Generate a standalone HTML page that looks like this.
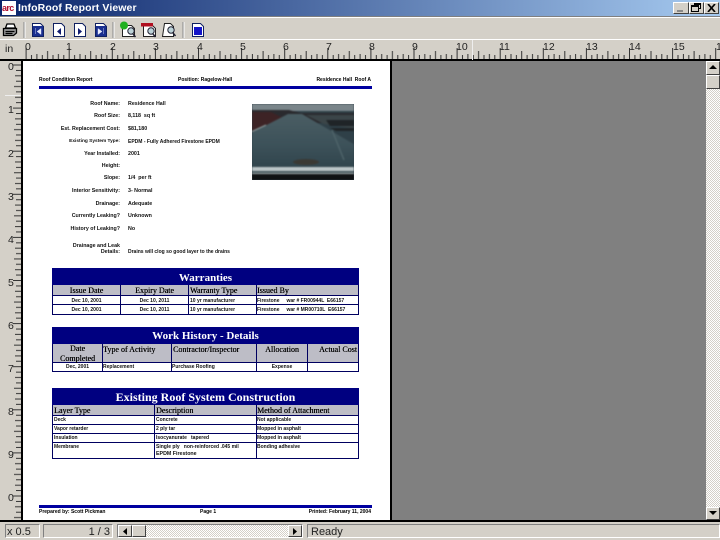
<!DOCTYPE html>
<html><head><meta charset="utf-8"><style>
html,body{margin:0;padding:0;background:#d4d0c8}
#a{position:relative;width:720px;height:540px;overflow:hidden;background:#d4d0c8;font-family:"Liberation Sans",sans-serif}
#a div,#a svg{position:absolute}
.t{white-space:nowrap;color:#000}
.lb{right:600px;font:bold 5.3px "Liberation Sans",sans-serif;white-space:nowrap;color:#111;line-height:6px;filter:blur(.25px)}
.vl{left:128px;font:bold 5.3px "Liberation Sans",sans-serif;white-space:nowrap;color:#111;line-height:6px;filter:blur(.25px)}
.n{font:10.5px "Liberation Sans",sans-serif;color:#222;line-height:11px}
.tb{background:#000080;color:#fff;font:bold 11px "Liberation Serif",serif;text-align:center}
.hd{background:#bdbdc6;font:8px "Liberation Serif",serif;color:#000;white-space:nowrap;line-height:9px;text-shadow:.2px 0 0 #000}
.c{font:bold 5px "Liberation Sans",sans-serif;color:#111;white-space:nowrap;line-height:7px;filter:blur(.2px)}
.ln{background:#000060}
.sk{border:1px solid;border-color:#808080 #fff #fff #808080;box-sizing:border-box}
.btn{background:#d4d0c8;border:1px solid;border-color:#fff #404040 #404040 #fff;box-sizing:border-box}
</style></head><body><div id="a">

<!-- title bar -->
<div style="left:0;top:0;width:720px;height:16px;background:linear-gradient(90deg,#0a246a,#a6caf0)"></div>
<div style="left:2px;top:1px;width:14px;height:14px;background:#fff;overflow:hidden;color:#b01030;font:bold 9px/14px 'Liberation Sans',sans-serif;letter-spacing:-.6px">arc</div>
<div class="t" style="left:18px;top:1px;color:#fff;font:bold 10.5px/15px 'Liberation Sans',sans-serif;letter-spacing:.1px">InfoRoof Report Viewer</div>
<div class="btn" style="left:673px;top:2px;width:16px;height:12px"></div><div style="left:677px;top:10px;width:6px;height:2px;background:#888"></div>
<div class="btn" style="left:689px;top:2px;width:15px;height:12px"></div>
<svg style="left:691px;top:3px" width="11" height="10"><path d="M3.5 2.5V.5h6v5h-2M.5 2.5h7v6h-7zM.5 3.5h7M3.5 1.5h6" fill="none" stroke="#000"/></svg>
<div class="btn" style="left:704px;top:2px;width:15px;height:12px"></div>
<svg style="left:707px;top:4px" width="9" height="8"><path d="M1 0l7 8M8 0L1 8" stroke="#000" stroke-width="1.7"/></svg>

<div style="left:0;top:16px;width:720px;height:1px;background:#808080"></div>
<div style="left:0;top:17px;width:720px;height:1px;background:#fff"></div>
<div style="left:0;top:39px;width:720px;height:1px;background:#fff"></div>

<!-- toolbar -->
<svg style="left:0;top:19px" width="210" height="20">
<g fill="none" stroke="#000" stroke-width="1.300">
<path d="M7 5h7l1.500 4H5.500z" fill="#fff"/>
<path d="M3.500 9.500h13v4.500l-3 2.500h-10z" fill="#999"/>
<path d="M5.500 12.500h9M5.500 14.500h7"/>
</g>
<path d="M24 3v16" stroke="#888"/><path d="M25 3v16" stroke="#fff"/>
<path d="M113 3v16" stroke="#888"/><path d="M114 3v16" stroke="#fff"/>
<path d="M183 3v16" stroke="#888"/><path d="M184 3v16" stroke="#fff"/>
<g stroke="#102060" fill="#fff">
<path d="M32.500 4.500h8l3 3v10h-11z"/>
<path d="M53.500 4.500h8l3 3v10h-11z"/>
<path d="M74.500 4.500h8l3 3v10h-11z"/>
<path d="M95.500 4.500h8l3 3v10h-11z"/>
</g>
<rect x="33" y="7" width="10" height="10" fill="#1a2f90"/>
<rect x="96" y="7" width="10" height="10" fill="#1a2f90"/>
<path d="M35.500 9v6M41 9.500l-4 3 4 3z" fill="#e8ecff" stroke="#e8ecff" stroke-width=".4"/>
<path d="M98 9.500l4 3-4 3zM103.500 9v6" fill="#e8ecff" stroke="#e8ecff" stroke-width=".4"/>
<path d="M61 9l-4 3.500 4 3.500z" fill="#101c70"/>
<path d="M78 9l4 3.500-4 3.500z" fill="#101c70"/>

<path d="M122.500 6.500h9l3 3v8h-12z" fill="#fff" stroke="#222"/>
<circle cx="124" cy="6.500" r="4" fill="#20b020"/>
<circle cx="131" cy="12" r="3.200" fill="#bcd2d8" stroke="#223"/><path d="M133 15l2.500 3" stroke="#223" stroke-width="1.500"/>
<path d="M143.500 6.500h9l3 3v8h-12z" fill="#fff" stroke="#222"/>
<rect x="141" y="4" width="12" height="3.500" fill="#b01020"/>
<circle cx="151" cy="12" r="3.200" fill="#bcd2d8" stroke="#223"/><path d="M153 15l2.500 3" stroke="#223" stroke-width="1.500"/>
<path d="M164.500 4.500h6l3 3v10h-11z" fill="#fff" stroke="#222"/>
<circle cx="171" cy="11" r="3.200" fill="#bcd2d8" stroke="#223"/><path d="M173 14l2.500 3" stroke="#223" stroke-width="1.500"/>
<path d="M192.500 4.500h8l3 3v10h-11z" fill="#fff" stroke="#102060"/>
<rect x="194" y="8" width="8" height="8" fill="#1414c8"/>
</svg>

<!-- top ruler -->
<svg style="left:0;top:40px" width="720" height="20">
<defs><pattern id="rt" patternUnits="userSpaceOnUse" x="25.600" y="0" width="43.100" height="20">
<g stroke="#333" stroke-width="1">
<path d="M.5 8V20M5.900 15V20M11.300 14V20M16.700 15V20M22 11V20M27.400 15V20M32.800 14V20M38.200 15V20"/>
</g></pattern></defs>
<rect x="22" y="0" width="698" height="20" fill="url(#rt)"/>
</svg>
<div style="left:0;top:59px;width:720px;height:2px;background:#000"></div>
<div style="left:472px;top:40px;width:1px;height:20px;background:#eee"></div>
<div class="n" style="left:5px;top:44px">in</div>
<div class="n" style="left:25px;top:42px">0</div><div class="n" style="left:66px;top:42px">1</div><div class="n" style="left:110px;top:42px">2</div><div class="n" style="left:153px;top:42px">3</div><div class="n" style="left:197px;top:42px">4</div><div class="n" style="left:240px;top:42px">5</div><div class="n" style="left:283px;top:42px">6</div><div class="n" style="left:326px;top:42px">7</div><div class="n" style="left:369px;top:42px">8</div><div class="n" style="left:412px;top:42px">9</div><div class="n" style="left:456px;top:42px">10</div><div class="n" style="left:499px;top:42px">11</div><div class="n" style="left:543px;top:42px">12</div><div class="n" style="left:586px;top:42px">13</div><div class="n" style="left:629px;top:42px">14</div><div class="n" style="left:673px;top:42px">15</div><div class="n" style="left:716px;top:42px">16</div>

<!-- left ruler -->
<svg style="left:0;top:61px" width="22" height="460">
<defs><pattern id="rl" patternUnits="userSpaceOnUse" x="0" y="3.500" width="22" height="43.100">
<g stroke="#333" stroke-width="1">
<path d="M13 .5H22M16 5.900H22M15 11.300H22M16 16.700H22M14 22H22M16 27.400H22M15 32.800H22M16 38.200H22"/>
</g></pattern></defs>
<rect width="22" height="460" fill="url(#rl)"/>
</svg>
<div class="n" style="left:8px;top:62px">0</div><div class="n" style="left:8px;top:105px">1</div><div class="n" style="left:8px;top:149px">2</div><div class="n" style="left:8px;top:192px">3</div><div class="n" style="left:8px;top:235px">4</div><div class="n" style="left:8px;top:278px">5</div><div class="n" style="left:8px;top:321px">6</div><div class="n" style="left:8px;top:364px">7</div><div class="n" style="left:8px;top:407px">8</div><div class="n" style="left:8px;top:450px">9</div><div class="n" style="left:8px;top:493px">0</div>
<div style="left:5px;top:95px;width:16px;height:1px;background:#eee"></div>

<!-- page area -->
<div style="left:21px;top:59px;width:2px;height:462px;background:#000"></div>
<div style="left:23px;top:61px;width:367px;height:460px;background:#fff"></div>
<div style="left:390px;top:60px;width:2px;height:461px;background:#000"></div>
<div style="left:392px;top:61px;width:314px;height:460px;background:#808080"></div>
<div style="left:0;top:520px;width:720px;height:2px;background:#000"></div>

<!-- vertical scrollbar -->
<div style="left:706px;top:61px;width:14px;height:459px;background-color:#e8e6e2;background-image:repeating-conic-gradient(#d4d0c8 0 25%,#fff 0 50%);background-size:2px 2px"></div>
<div class="btn" style="left:706px;top:61px;width:14px;height:14px"></div>
<svg style="left:709px;top:65px" width="8" height="5"><path d="M4 0l4 4H0z" fill="#000"/></svg>
<div class="btn" style="left:706px;top:75px;width:14px;height:14px"></div>
<div class="btn" style="left:706px;top:507px;width:14px;height:13px"></div>
<svg style="left:709px;top:511px" width="8" height="5"><path d="M0 0h8L4 4z" fill="#000"/></svg>

<!-- page header -->
<div class="t" style="left:39px;top:77px;font:bold 5px/6px 'Liberation Sans',sans-serif">Roof Condition Report</div>
<div class="t" style="left:178px;top:77px;font:bold 5px/6px 'Liberation Sans',sans-serif">Position: Ragelow-Hall</div>
<div class="t" style="right:349px;top:77px;font:bold 5px/6px 'Liberation Sans',sans-serif">Residence Hall &nbsp;Roof A</div>
<div style="left:39px;top:86px;width:333px;height:3px;background:#0000a0"></div>

<!-- fields -->
<div class="lb" style="top:101px">Roof Name:</div><div class="vl" style="top:101px">Residence Hall</div>
<div class="lb" style="top:113px">Roof Size:</div><div class="vl" style="top:113px">8,118 &nbsp;sq ft</div>
<div class="lb" style="top:126px">Est. Replacement Cost:</div><div class="vl" style="top:126px">$81,180</div>
<div class="lb" style="top:139px;font-size:4.800px">Existing System Type:</div><div class="vl" style="top:139px;font-size:5px">EPDM - Fully Adhered Firestone EPDM</div>
<div class="lb" style="top:151px">Year Installed:</div><div class="vl" style="top:151px">2001</div>
<div class="lb" style="top:163px">Height:</div>
<div class="lb" style="top:175px">Slope:</div><div class="vl" style="top:175px">1/4 &nbsp;per ft</div>
<div class="lb" style="top:188px">Interior Sensitivity:</div><div class="vl" style="top:188px">3- Normal</div>
<div class="lb" style="top:201px">Drainage:</div><div class="vl" style="top:201px">Adequate</div>
<div class="lb" style="top:213px">Currently Leaking?</div><div class="vl" style="top:213px">Unknown</div>
<div class="lb" style="top:226px">History of Leaking?</div><div class="vl" style="top:226px">No</div>
<div class="lb" style="top:243px">Drainage and Leak</div>
<div class="lb" style="top:249px">Details:</div><div class="vl" style="top:249px;font-size:5px">Drains will clog so good layer to the drains</div>

<!-- photo -->
<div style="left:252px;top:104px;width:102px;height:76px;overflow:hidden;background:#2f4048">
<svg style="left:0;top:0;filter:blur(.8px)" width="102" height="76" viewBox="0 0 102 76">
<defs><linearGradient id="rf" x1="0" y1="0" x2="0" y2="1"><stop offset="0" stop-color="#4a5d63"/><stop offset=".5" stop-color="#3c5159"/><stop offset="1" stop-color="#2c3f47"/></linearGradient></defs>
<rect x="-3" y="-3" width="108" height="84" fill="#2f4048"/>
<rect x="-3" y="-3" width="108" height="10" fill="#7a858a"/>
<path d="M-3 6h40l12 3h56v10H60L36 16-3 30z" fill="#2a2a2e"/>
<path d="M-3 8h22l12 6-8 6L-3 31z" fill="#3d2325"/>
<path d="M-3 30L36 10h14l55 32v30H-3z" fill="url(#rf)"/>
<path d="M54 11h51v14L72 20z" fill="#3b4548"/>
<path d="M74 16h28v6H78zM78 24h24v3H84z" fill="#1f2427"/>
<path d="M-3 29L14 21" stroke="#8a9a9c" stroke-width="1.200" fill="none"/>
<path d="M80 26l12 30" stroke="#4e6369" stroke-width="1.500" fill="none"/>
<ellipse cx="54" cy="58" rx="13" ry="3" fill="#3a3934"/>
<rect x="-3" y="63" width="108" height="4" fill="#bcc6c8"/>
<rect x="-3" y="67" width="108" height="2" fill="#46565c"/>
<rect x="-3" y="69" width="108" height="1" fill="#aab4b6"/>
<rect x="-3" y="70" width="108" height="9" fill="#101214"/>
</svg></div>

<!-- warranties -->
<div class="tb" style="left:52px;top:268px;width:307px;height:17px;line-height:21px">Warranties</div>
<div class="hd" style="left:52px;top:285px;width:307px;height:10px"></div>
<div class="ln" style="left:52px;top:285px;width:1px;height:30px"></div>
<div class="ln" style="left:358px;top:285px;width:1px;height:30px"></div>
<div class="ln" style="left:120px;top:285px;width:1px;height:30px"></div>
<div class="ln" style="left:188px;top:285px;width:1px;height:30px"></div>
<div class="ln" style="left:256px;top:285px;width:1px;height:30px"></div>
<div class="ln" style="left:52px;top:295px;width:307px;height:1px"></div>
<div class="ln" style="left:52px;top:304px;width:307px;height:1px"></div>
<div class="ln" style="left:52px;top:314px;width:307px;height:1px"></div>
<div class="hd" style="left:53px;top:286px;width:67px;text-align:center;background:none">Issue Date</div>
<div class="hd" style="left:121px;top:286px;width:67px;text-align:center;background:none">Expiry Date</div>
<div class="hd" style="left:190px;top:286px;background:none">Warranty Type</div>
<div class="hd" style="left:257px;top:286px;background:none">Issued By</div>
<div class="c" style="left:53px;top:298px;width:67px;text-align:center">Dec 10, 2001</div>
<div class="c" style="left:121px;top:298px;width:67px;text-align:center">Dec 10, 2011</div>
<div class="c" style="left:190px;top:298px">10 yr manufacturer</div>
<div class="c" style="left:257px;top:298px">Firestone &nbsp;&nbsp;&nbsp;&nbsp;war # FR00944L &nbsp;E66157</div>
<div class="c" style="left:53px;top:307px;width:67px;text-align:center">Dec 10, 2001</div>
<div class="c" style="left:121px;top:307px;width:67px;text-align:center">Dec 10, 2011</div>
<div class="c" style="left:190px;top:307px">10 yr manufacturer</div>
<div class="c" style="left:257px;top:307px">Firestone &nbsp;&nbsp;&nbsp;&nbsp;war # MR00710L &nbsp;E66157</div>

<!-- work history -->
<div class="tb" style="left:52px;top:327px;width:307px;height:17px;line-height:18px">Work History - Details</div>
<div class="hd" style="left:52px;top:344px;width:307px;height:18px"></div>
<div class="ln" style="left:52px;top:344px;width:1px;height:28px"></div>
<div class="ln" style="left:358px;top:344px;width:1px;height:28px"></div>
<div class="ln" style="left:102px;top:344px;width:1px;height:28px"></div>
<div class="ln" style="left:171px;top:344px;width:1px;height:28px"></div>
<div class="ln" style="left:256px;top:344px;width:1px;height:28px"></div>
<div class="ln" style="left:307px;top:344px;width:1px;height:28px"></div>
<div class="ln" style="left:52px;top:362px;width:307px;height:1px"></div>
<div class="ln" style="left:52px;top:371px;width:307px;height:1px"></div>
<div class="hd" style="left:53px;top:344px;width:49px;text-align:center;background:none;font-size:8px;line-height:10px">Date<br>Completed</div>
<div class="hd" style="left:103px;top:345px;background:none">Type of Activity</div>
<div class="hd" style="left:173px;top:345px;background:none">Contractor/Inspector</div>
<div class="hd" style="left:257px;top:345px;width:50px;text-align:center;background:none">Allocation</div>
<div class="hd" style="left:308px;top:345px;width:49px;text-align:right;background:none">Actual Cost</div>
<div class="c" style="left:53px;top:364px;width:49px;text-align:center">Dec, 2001</div>
<div class="c" style="left:103px;top:364px">Replacement</div>
<div class="c" style="left:172px;top:364px">Purchase Roofing</div>
<div class="c" style="left:257px;top:364px;width:50px;text-align:center">Expense</div>

<!-- construction -->
<div class="tb" style="left:52px;top:388px;width:307px;height:17px;line-height:18px;font-size:12px">Existing Roof System Construction</div>
<div class="hd" style="left:52px;top:405px;width:307px;height:10px"></div>
<div class="ln" style="left:52px;top:405px;width:1px;height:54px"></div>
<div class="ln" style="left:358px;top:405px;width:1px;height:54px"></div>
<div class="ln" style="left:154px;top:405px;width:1px;height:54px"></div>
<div class="ln" style="left:256px;top:405px;width:1px;height:54px"></div>
<div class="ln" style="left:52px;top:415px;width:307px;height:1px"></div>
<div class="ln" style="left:52px;top:424px;width:307px;height:1px"></div>
<div class="ln" style="left:52px;top:433px;width:307px;height:1px"></div>
<div class="ln" style="left:52px;top:442px;width:307px;height:1px"></div>
<div class="ln" style="left:52px;top:458px;width:307px;height:1px"></div>
<div class="hd" style="left:54px;top:406px;background:none">Layer Type</div>
<div class="hd" style="left:156px;top:406px;background:none">Description</div>
<div class="hd" style="left:257px;top:406px;background:none">Method of Attachment</div>
<div class="c" style="left:54px;top:417px">Deck</div><div class="c" style="left:156px;top:417px">Concrete</div><div class="c" style="left:257px;top:417px">Not applicable</div>
<div class="c" style="left:54px;top:426px">Vapor retarder</div><div class="c" style="left:156px;top:426px">2 ply tar</div><div class="c" style="left:257px;top:426px">Mopped in asphalt</div>
<div class="c" style="left:54px;top:435px">Insulation</div><div class="c" style="left:156px;top:435px">Isocyanurate &nbsp;&nbsp;tapered</div><div class="c" style="left:257px;top:435px">Mopped in asphalt</div>
<div class="c" style="left:54px;top:444px">Membrane</div><div class="c" style="left:156px;top:444px">Single ply &nbsp;&nbsp;non-reinforced .045 mil</div><div class="c" style="left:257px;top:444px">Bonding adhesive</div>
<div class="c" style="left:156px;top:451px;font-size:5.300px">EPDM Firestone</div>

<!-- page footer -->
<div style="left:39px;top:505px;width:333px;height:3px;background:#0000a0"></div>
<div class="t" style="left:39px;top:509px;font:bold 5px/6px 'Liberation Sans',sans-serif">Prepared by: Scott Pickman</div>
<div class="t" style="left:200px;top:509px;font:bold 5px/6px 'Liberation Sans',sans-serif">Page 1</div>
<div class="t" style="right:349px;top:509px;font:bold 5px/6px 'Liberation Sans',sans-serif">Printed: February 11, 2004</div>

<!-- status bar -->
<div class="sk" style="left:5px;top:524px;width:35px;height:14px"></div>
<div class="t" style="left:7px;top:526px;font:11px/12px 'Liberation Sans',sans-serif;color:#222">x 0.5</div>
<div class="sk" style="left:43px;top:524px;width:70px;height:14px"></div>
<div class="t" style="right:610px;top:526px;font:11px/12px 'Liberation Sans',sans-serif;color:#222">1 / 3</div>
<div class="sk" style="left:117px;top:524px;width:186px;height:14px;background-image:repeating-conic-gradient(#d4d0c8 0 25%,#fff 0 50%);background-size:2px 2px"></div>
<div class="btn" style="left:118px;top:525px;width:14px;height:12px"></div>
<svg style="left:123px;top:528px" width="4" height="7"><path d="M4 0v7L0 3.500z" fill="#000"/></svg>
<div class="btn" style="left:132px;top:525px;width:14px;height:12px"></div>
<div class="btn" style="left:288px;top:525px;width:14px;height:12px"></div>
<svg style="left:293px;top:528px" width="4" height="7"><path d="M0 0v7l4-3.500z" fill="#000"/></svg>
<div class="sk" style="left:307px;top:524px;width:413px;height:14px"></div>
<div class="t" style="left:311px;top:526px;font:11px/12px 'Liberation Sans',sans-serif;color:#222">Ready</div>
</div></body></html>
